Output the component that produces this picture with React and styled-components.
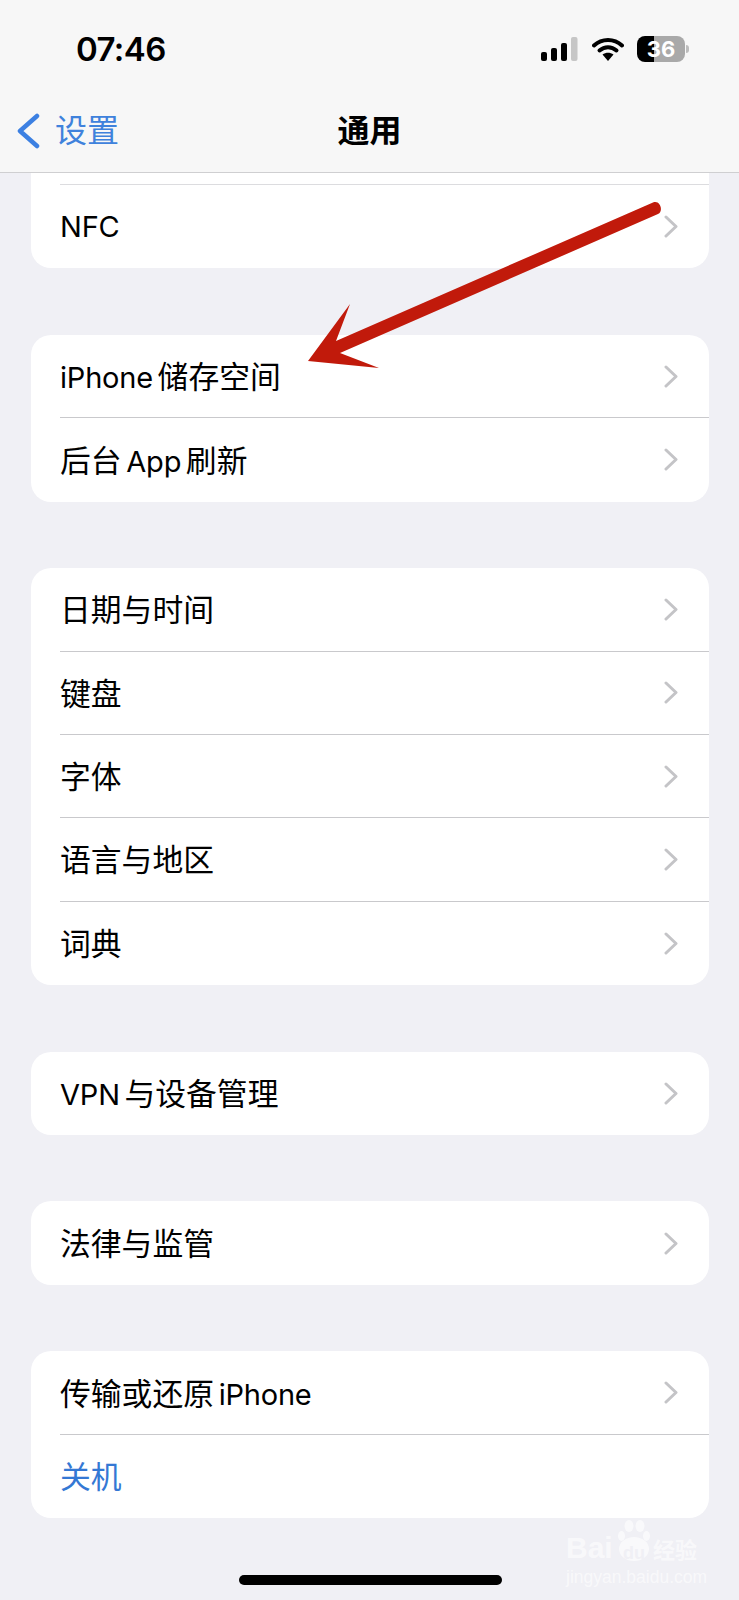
import React from "react";
import styled, { createGlobalStyle } from "styled-components";

const sections = [
  { items: ["NFC"], cut: true },
  { items: ["iPhone 储存空间", "后台 App 刷新"] },
  { items: ["日期与时间", "键盘", "字体", "语言与地区", "词典"] },
  { items: ["VPN 与设备管理"] },
  { items: ["法律与监管"] },
  { items: ["传输或还原 iPhone", { label: "关机", action: true }] },
];

// latin runs are set a little smaller than the CJK ones, as on the phone
function splitLabel(text) {
  return text.split(/([A-Za-z]+)/).map((part, i) =>
    /[A-Za-z]/.test(part) ? <Latin key={i}>{part}</Latin> : part
  );
}

function Chevron() {
  return (
    <ChevronIcon viewBox="0 0 14 23" fill="none">
      <path d="M2 2l10 9.5L2 21" stroke="#c4c4c7" strokeWidth="3" strokeLinecap="round" strokeLinejoin="round" />
    </ChevronIcon>
  );
}

function Signal() {
  return (
    <svg width="37" height="24" viewBox="0 0 37 24" fill="none">
      <rect x="0" y="15" width="6" height="9" rx="2" fill="#000" />
      <rect x="10" y="11" width="6" height="13" rx="2" fill="#000" />
      <rect x="20" y="6" width="6" height="18" rx="2" fill="#000" />
      <rect x="30" y="0" width="6.5" height="24" rx="2" fill="#c6c6c6" />
    </svg>
  );
}

function Wifi() {
  return (
    <svg width="32" height="24" viewBox="0 0 32 24" fill="none">
      <path d="M2 8.5C10 1 22 1 30 8.5" stroke="#000" strokeWidth="4" strokeLinecap="round" />
      <path d="M7.5 13.5C12.5 9 19.5 9 24.5 13.5" stroke="#000" strokeWidth="4" strokeLinecap="round" />
      <path d="M10.5 17.5L16 24l5.5-6.5C18 15 14 15 10.5 17.5z" fill="#000" />
    </svg>
  );
}

function Arrow() {
  return (
    <ArrowOverlay viewBox="0 0 739 1600">
      <path
        d="M308 361L350 304L336 341L653 202.5C660 199.500 664 211 658 214L340 353L379 368Z"
        fill="#c11a0b"
      />
    </ArrowOverlay>
  );
}

function Watermark() {
  return (
    <MarkBox>
      <MarkTop>
        <MarkBai>Bai</MarkBai>
        <MarkPaw viewBox="0 0 32 44">
          <ellipse cx="11" cy="7" rx="4.500" ry="6" />
          <ellipse cx="22" cy="7" rx="4.500" ry="6" />
          <ellipse cx="3.500" cy="17" rx="3.500" ry="5" />
          <ellipse cx="28.500" cy="17" rx="3.500" ry="5" />
          <ellipse cx="16" cy="30" rx="15" ry="12" />
        </MarkPaw>
        <MarkDu>du</MarkDu>
        <MarkWord>经验</MarkWord>
      </MarkTop>
      <MarkUrl>jingyan.baidu.com</MarkUrl>
    </MarkBox>
  );
}

export default function App() {
  return (
    <Page>
      <GlobalStyle />
      <Header>
        <StatusBar>
          <Clock>07:46</Clock>
          <StatusIcons>
            <Signal />
            <Wifi />
            <Battery $level={36}>
              36
              <BatteryNub />
            </Battery>
          </StatusIcons>
        </StatusBar>
        <NavBar>
          <BackLink>
            <BackChevron viewBox="0 0 24 36" fill="none">
              <path d="M21 3L4 18l17 15" stroke="#3c80e2" strokeWidth="4.500" strokeLinecap="round" strokeLinejoin="round" />
            </BackChevron>
            <BackLabel>设置</BackLabel>
          </BackLink>
          <Title>通用</Title>
        </NavBar>
      </Header>
      <List>
        {sections.map((section, i) => (
          <Group key={i} $cut={section.cut}>
            {section.cut && <Stub />}
            {section.items.map((item) => {
              const label = item.label || item;
              return (
                <Row key={label}>
                  <Label $action={item.action}>{splitLabel(label)}</Label>
                  {!item.action && <Chevron />}
                </Row>
              );
            })}
          </Group>
        ))}
      </List>
      <Arrow />
      <Watermark />
      <HomeBar />
    </Page>
  );
}

const GlobalStyle = createGlobalStyle`
  html, body {
    margin: 0;
    padding: 0;
    background: #f0f0f5;
  }
`;

const Page = styled.div`
  position: relative;
  width: 739px;
  height: 1600px;
  overflow: hidden;
  background: #f0f0f5;
  font-family: Inter, "Noto Sans CJK SC", sans-serif;
  color: #000;
`;

const Header = styled.header`
  background: #f7f7f7;
  border-bottom: 1px solid #cfcfd1;
  padding-bottom: 14px;
`;

const StatusBar = styled.div`
  height: 98px;
  display: flex;
  align-items: center;
  justify-content: space-between;
  padding: 0 54px 0 76px;
`;

const Clock = styled.div`
  font-size: 33px;
  font-weight: 600;
  letter-spacing: -0.6px;
`;

const StatusIcons = styled.div`
  display: flex;
  align-items: center;
  gap: 13.500px;
`;

const Battery = styled.div`
  position: relative;
  width: 48px;
  height: 26px;
  border-radius: 8px;
  display: flex;
  align-items: center;
  justify-content: center;
  font-size: 22px;
  font-weight: 700;
  color: #fff;
  background: linear-gradient(
    to right,
    #000 ${(p) => p.$level}%,
    #a9a9a9 ${(p) => p.$level}%
  );
`;

const BatteryNub = styled.span`
  position: absolute;
  right: -4px;
  top: 9px;
  width: 3px;
  height: 8px;
  border-radius: 0 3px 3px 0;
  background: #bdbdbd;
`;

const NavBar = styled.nav`
  position: relative;
  height: 60px;
  display: flex;
  align-items: center;
  justify-content: center;
`;

const BackLink = styled.div`
  position: absolute;
  left: 16px;
  top: 0;
  bottom: 0;
  display: flex;
  align-items: center;
  gap: 15px;
`;

const BackChevron = styled.svg`
  width: 24px;
  height: 36px;
  margin-top: 6px;
`;

const BackLabel = styled.span`
  font-size: 32px;
  color: #3f82dc;
`;

const Title = styled.h1`
  margin: 0;
  font-size: 32px;
  font-weight: 700;
`;

const List = styled.main`
  display: flex;
  flex-direction: column;
  gap: 66.600px;
  padding: 0 30px 0 31px;
`;

const Group = styled.section`
  background: #fff;
  border-radius: ${(p) => (p.$cut ? "0 0 20px 20px" : "20px")};
  overflow: hidden;
`;

const Stub = styled.div`
  height: 11px;
  margin-left: 29px;
  border-bottom: 1.500px solid #dcdcdf;
`;

const Row = styled.div`
  height: 83.350px;
  box-sizing: border-box;
  margin-left: 29px;
  padding-right: 31px;
  display: flex;
  align-items: center;
  justify-content: space-between;
  border-bottom: 1.500px solid #c9c9cc;

  &:last-child {
    border-bottom: none;
  }
`;

const Label = styled.span`
  font-size: 30.800px;
  word-spacing: -4px;
  padding-bottom: 3px;
  color: ${(p) => (p.$action ? "#3478d4" : "#000")};
`;

const Latin = styled.span`
  font-size: 29px;
  letter-spacing: -0.2px;
`;

const ChevronIcon = styled.svg`
  width: 14px;
  height: 23px;
`;

const ArrowOverlay = styled.svg`
  position: absolute;
  left: 0;
  top: 0;
  width: 739px;
  height: 1600px;
  pointer-events: none;
`;

const HomeBar = styled.div`
  position: absolute;
  left: 239px;
  bottom: 15px;
  width: 263px;
  height: 10px;
  border-radius: 5px;
  background: #000;
`;

const MarkBox = styled.div`
  position: absolute;
  left: 566px;
  top: 1519px;
  width: 136px;
  color: rgba(255, 255, 255, 0.6);
`;

const MarkTop = styled.div`
  position: relative;
  height: 46px;
`;

const MarkBai = styled.span`
  position: absolute;
  left: 0;
  bottom: 2px;
  font-family: "Liberation Sans", sans-serif;
  font-size: 30px;
  line-height: 30px;
  font-weight: 700;
`;

const MarkPaw = styled.svg`
  position: absolute;
  left: 52px;
  top: 0;
  width: 32px;
  height: 44px;
  fill: rgba(255, 255, 255, 0.6);
`;

const MarkDu = styled.span`
  position: absolute;
  left: 57px;
  top: 25px;
  font-family: "Liberation Sans", sans-serif;
  font-size: 18px;
  line-height: 18px;
  font-weight: 700;
  color: #f0f0f5;
`;

const MarkWord = styled.span`
  position: absolute;
  left: 87px;
  top: 19px;
  font-size: 22px;
  line-height: 24px;
  font-weight: 700;
`;

const MarkUrl = styled.div`
  margin-top: 3px;
  font-family: "Liberation Sans", sans-serif;
  font-size: 17.500px;
  line-height: 18px;
  white-space: nowrap;
`;
